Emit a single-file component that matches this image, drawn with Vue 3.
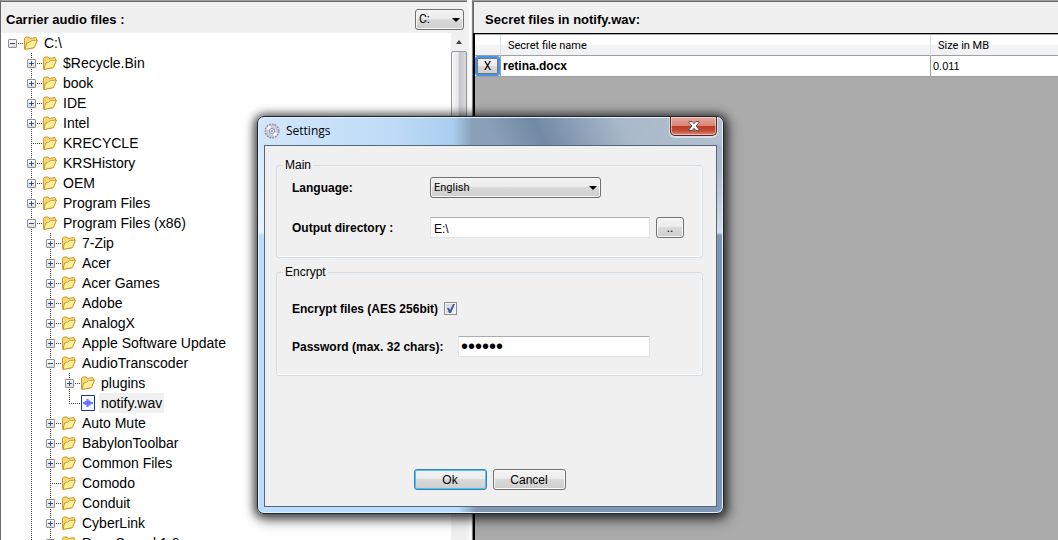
<script setup>
import { ref } from 'vue'

const entries = [
  [0, 'C:\\', 'minus'],
  [1, '$Recycle.Bin', 'plus'],
  [1, 'book', 'plus'],
  [1, 'IDE', 'plus'],
  [1, 'Intel', 'plus'],
  [1, 'KRECYCLE', ''],
  [1, 'KRSHistory', 'plus'],
  [1, 'OEM', 'plus'],
  [1, 'Program Files', 'plus'],
  [1, 'Program Files (x86)', 'minus'],
  [2, '7-Zip', 'plus'],
  [2, 'Acer', 'plus'],
  [2, 'Acer Games', 'plus'],
  [2, 'Adobe', 'plus'],
  [2, 'AnalogX', 'plus'],
  [2, 'Apple Software Update', 'plus'],
  [2, 'AudioTranscoder', 'minus'],
  [3, 'plugins', 'plus'],
  [3, 'notify.wav', '', true],
  [2, 'Auto Mute', 'plus'],
  [2, 'BabylonToolbar', 'plus'],
  [2, 'Common Files', 'plus'],
  [2, 'Comodo', ''],
  [2, 'Conduit', 'plus'],
  [2, 'CyberLink', 'plus'],
  [2, 'DeepSound 1.6', 'plus'],
]
const rows = entries.map(([depth, name, toggle, wave]) => ({ depth, name, toggle, wave: !!wave }))

const drive = ref('C:')
const language = ref('English')
const output = ref('E:\\')
const encrypt = ref(true)
const password = ref('secret')
</script>

<template>
  <main class="app">
    <section class="carrier">
      <header class="bar">
        <label for="drive">Carrier audio files :</label>
        <span class="combo drive">
          <select id="drive" v-model="drive"><option>C:</option></select>
        </span>
      </header>
      <div class="browser">
        <ul class="tree">
          <li v-for="row in rows" :key="row.name" class="row">
            <span v-for="n in row.depth" :key="n" class="guide" :class="{ line: n > 1 }"></span>
            <span class="guide branch" :class="{ line: row.depth > 0, last: row.wave }">
              <button v-if="row.toggle" class="toggle" :class="row.toggle" :aria-label="'Toggle ' + row.name"></button>
            </span>
            <svg v-if="!row.wave" class="icon" width="14" height="14" viewBox="0 0 14 14">
              <path d="M.5 12.500V2L2 1h3l1 1.500 6-1 .500 1V6l-3 6-9 1z" fill="#f8d774" stroke="#d09b33" />
              <path d="M2.500 7l3-.500 1.500-1.500 6.500-1-3 7.500-9.500 2z" fill="#fff095" stroke="#cf9426" />
              <path d="M4 7.500l2-.500 1.500-1.200 4.500-.600" fill="none" stroke="#fffbd0" />
            </svg>
            <svg v-else class="icon" width="14" height="16" viewBox="0 0 14 16">
              <path d="M.5.5h13v15H.5z" fill="#f4f7ff" stroke="#173b72" />
              <path d="M2 8h10M4.500 6v4M6.500 4v8M8.500 5.500v5M10.500 7v2" fill="none" stroke="#6d75ff" stroke-width="2" />
            </svg>
            <span class="name" :class="{ picked: row.wave }">{{ row.name }}</span>
          </li>
        </ul>
        <div class="scroll">
          <svg width="16" height="18" viewBox="0 0 16 18"><path d="M5 11l3-4 3 4z" fill="#404040" /></svg>
          <div class="thumb"></div>
        </div>
      </div>
    </section>

    <section class="secret">
      <header class="bar"><h1>Secret files in notify.wav:</h1></header>
      <div class="grid">
        <table>
          <thead>
            <tr><th class="action"></th><th>Secret file name</th><th class="size">Size in MB</th></tr>
          </thead>
          <tbody>
            <tr>
              <td class="action"><button class="remove" aria-label="Remove retina.docx">X</button></td>
              <td class="file">retina.docx</td>
              <td>0.011</td>
            </tr>
          </tbody>
        </table>
      </div>
    </section>

    <section class="dialog" role="dialog" aria-labelledby="dialog-title">
      <header class="title">
        <svg width="16" height="16" viewBox="0 0 16 16">
          <circle cx="8" cy="8" r="6.500" fill="none" stroke="#85859a" stroke-width="2" stroke-dasharray="1.700 1" />
          <circle cx="8" cy="8" r="5.500" fill="#d3d3e2" stroke="#c4c4d4" stroke-width="2" />
          <path d="M8 8L2.500 6A6 6 0 0 1 6 2.500zM8 8l5.500 2A6 6 0 0 1 10 13.500z" fill="#fff" />
          <circle cx="8" cy="8" r="2.500" fill="#eef6fa" stroke="#85879b" />
          <circle cx="8" cy="8" r="1" fill="#6fa3b8" />
        </svg>
        <h2 id="dialog-title">Settings</h2>
        <button class="close" aria-label="Close">
          <svg width="12" height="10" viewBox="0 0 12 10">
            <path d="M1 .5h3.200L6 2.700 7.800.500H11v1L8.200 5 11 8.500v1H7.800L6 7.300 4.200 9.500H1v-1L3.800 5 1 1.500z" fill="#fff" stroke="#5c4e5c" />
          </svg>
        </button>
      </header>
      <form class="client" @submit.prevent>
        <fieldset>
          <legend>Main</legend>
          <div class="field">
            <label for="language">Language:</label>
            <span class="combo language">
              <select id="language" v-model="language"><option>English</option></select>
            </span>
          </div>
          <div class="field">
            <label for="output">Output directory :</label>
            <input id="output" v-model="output" class="text" type="text" />
            <button type="button" class="browse" aria-label="Browse">..</button>
          </div>
        </fieldset>
        <fieldset class="encrypt">
          <legend>Encrypt</legend>
          <div class="field">
            <label for="encrypt" class="inline">Encrypt files (AES 256bit)</label>
            <input id="encrypt" v-model="encrypt" class="check" type="checkbox" />
          </div>
          <div class="field">
            <label for="password">Password (max. 32 chars):</label>
            <input id="password" v-model="password" class="text secretbox" type="password" />
          </div>
        </fieldset>
        <footer>
          <button type="submit" class="ok">Ok</button>
          <button type="button">Cancel</button>
        </footer>
      </form>
    </section>
  </main>
</template>

<style>
body {
  overflow: hidden;
}
</style>

<style scoped>
* {
  box-sizing: border-box;
}
.app {
  position: relative;
  display: grid;
  grid-template-columns: 467px minmax(0, 1fr);
  column-gap: 5px;
  height: 100vh;
  overflow: hidden;
  background: linear-gradient(90deg, #f0f0f0, #fff) 467px 0 / 4px 100% no-repeat #f0f0f0;
  color: #000;
  font-family: "Liberation Sans", Arial, sans-serif;
  font-size: 12px;
}
h1,
h2 {
  margin: 0;
  font-size: 13px;
}
button,
select,
input {
  margin: 0;
  color: #000;
  font-family: inherit;
  font-size: 12px;
}
button {
  padding: 0;
  border: 1px solid #707070;
  border-radius: 3px;
  background: linear-gradient(#f3f3f3, #ebebeb 49%, #dadada 50%, #cdcdcd);
  box-shadow: inset 0 0 0 1px #fafafa;
}
.carrier,
.secret {
  display: flex;
  flex-direction: column;
  min-height: 0;
  border-top: 1px solid #a0a0a0;
}
.carrier {
  border-left: 1px solid #696969;
}
.secret {
  border-left: 1px solid #808080;
}
.bar {
  display: flex;
  flex: none;
  align-items: center;
  justify-content: space-between;
  height: 32px;
  padding: 3px 3px 0 5px;
  border-top: 1px solid #696969;
  background: #f0f0f0;
  font-size: 13px;
  font-weight: bold;
}
.secret .bar {
  padding-left: 11px;
  border-left: 1px solid #696969;
}

/* drop-downs */
.combo {
  position: relative;
  display: inline-flex;
}
.combo select {
  width: 100%;
  height: 21px;
  padding: 0 3px;
  border: 1px solid #707070;
  border-radius: 3px;
  appearance: none;
  background: linear-gradient(#f3f3f3, #ebebeb 49%, #dadada 50%, #cdcdcd);
  box-shadow: inset 0 0 0 1px #f6f6f6;
  font-family: Roboto, sans-serif;
}
.combo::after {
  position: absolute;
  top: 9px;
  right: 4px;
  border: 4px solid transparent;
  border-top-color: #000;
  border-bottom: 0;
  content: "";
  pointer-events: none;
}
.drive {
  width: 49px;
}
.language {
  width: 171px;
}
.language select {
  font-size: 11px;
}

/* folder tree */
.browser {
  display: flex;
  flex: 1;
  min-height: 0;
  background: #fff;
}
.tree {
  flex: 1;
  margin: 0;
  padding: 0 0 0 2px;
  overflow: hidden;
  list-style: none;
  font-size: 14px;
}
.row {
  display: flex;
  align-items: center;
  height: 20px;
}
.guide {
  position: relative;
  display: flex;
  flex: none;
  align-items: center;
  width: 19px;
  height: 20px;
  padding-left: 5px;
}
.line {
  background: repeating-linear-gradient(#444 0 1px, transparent 1px 2px) 9px 0 / 1px 100% no-repeat;
}
.line.last {
  background-size: 1px 11px;
}
.branch::before {
  position: absolute;
  top: 10px;
  right: -1px;
  left: 10px;
  height: 1px;
  background: repeating-linear-gradient(90deg, transparent 0 1px, #444 1px 2px);
  content: "";
}
.toggle {
  position: relative;
  width: 9px;
  height: 9px;
  border-color: #919191;
  border-radius: 1px;
  background: linear-gradient(#2f4c94, #2f4c94) center / 5px 1px no-repeat, linear-gradient(#fff, #dcdcdc);
  box-shadow: none;
}
.toggle.plus {
  background: linear-gradient(#2f4c94, #2f4c94) center / 5px 1px no-repeat,
    linear-gradient(#2f4c94, #2f4c94) center / 1px 5px no-repeat, linear-gradient(#fff, #dcdcdc);
}
.icon {
  flex: none;
  margin: 0 4px 0 2px;
}
.name {
  padding: 0 2px;
  line-height: 20px;
  white-space: nowrap;
}
.picked {
  background: #f0f0f0;
}
.scroll {
  display: flex;
  flex-direction: column;
  flex: none;
  width: 16px;
  background: #f0f0f0;
}
.thumb {
  height: 60%;
  border: 1px solid #979797;
  border-radius: 2px;
  background: linear-gradient(90deg, #f5f5f5, #e9e9eb 45%, #c5c5c9 50%, #dadadc);
}

/* secret file table */
.grid {
  flex: 1;
  padding: 1px 0 0;
  border-top: 1px solid #000;
  border-left: 2px solid #000;
  background: #ababab;
}
table {
  width: 100%;
  border-collapse: separate;
  border-spacing: 0;
  background: #fff;
  font-family: Roboto, sans-serif;
  font-size: 11px;
}
th {
  height: 21px;
  padding: 0 7px;
  border-right: 1px solid #dedfe1;
  border-bottom: 1px solid #a0a0a0;
  background: linear-gradient(#fff 45%, #f3f4f6 50%, #f0f1f3);
  font-weight: normal;
  text-align: left;
}
td {
  height: 21px;
  padding: 0 2px;
  border-right: 1px solid #a0a0a0;
  border-bottom: 1px solid #a0a0a0;
}
td:last-child {
  font-family: "Liberation Sans", Arial, sans-serif;
}
th:last-child,
td:last-child {
  border-right: 0;
}
.action {
  width: 26px;
  padding: 0;
}
.size {
  width: 127px;
}
.remove {
  display: block;
  width: 100%;
  height: 20px;
  border: 2px solid #3e95ee;
  box-shadow: inset 0 0 0 1px #777;
  font-family: Roboto, sans-serif;
}
.file {
  font-family: "Liberation Sans", Arial, sans-serif;
  font-size: 12px;
  font-weight: bold;
}

/* settings window */
.dialog {
  position: absolute;
  top: 116px;
  left: 257px;
  width: 467px;
  padding: 0 6px 6px;
  border: 1px solid #20262e;
  border-radius: 7px;
  background:
    linear-gradient(65deg, transparent 50%, #7289a5 60%, #a9b9c9 78%, #b3c2d0) 0 0 / 100% 28px no-repeat,
    linear-gradient(90deg, #d3e7fb, #bddaf7 30%, #a9cdf0 42%, #8aa0b8 46%, #8ba2bd) 0 0 / 100% 28px no-repeat,
    linear-gradient(#d0e6fb, #e9f3fd 98%, #b9dcff) 0 0 / 50% 118px no-repeat,
    linear-gradient(#a9b9c9 40%, #d5dee8 98%, #8099b6) 100% 0 / 50% 118px no-repeat,
    linear-gradient(90deg, #b9dcff 43%, #8098b3 47%, #7d97b5);
  box-shadow: inset 0 0 0 1px #e4f0fb, 0 1px 8px 3px rgba(0, 0, 0, 0.6), 2px 4px 14px 3px rgba(0, 0, 0, 0.35);
}
.title {
  display: flex;
  align-items: center;
  height: 28px;
}
.title h2 {
  flex: 1;
  padding: 0 0 2px 6px;
  font-family: "Open Sans", sans-serif;
  font-size: 12px;
  font-weight: normal;
}
.close {
  display: flex;
  align-self: flex-start;
  align-items: center;
  justify-content: center;
  width: 47px;
  height: 19px;
  border-color: #51262a;
  border-top: 0;
  border-radius: 0 0 5px 5px;
  background: linear-gradient(#e8aaa0, #d88577 48%, #bd3b25 50%, #c34a33 75%, #dd8877);
  box-shadow: inset 0 0 0 1px rgba(255, 225, 215, 0.6), 0 1px 0 1px rgba(255, 255, 255, 0.5);
}
.client {
  padding: 11px 13px 16px 11px;
  border: 1px solid #56677c;
  background: #f0f0f0;
}
fieldset {
  display: block;
  min-width: 0;
  margin: 0 0 6px;
  padding: 4px 6px 19px;
  border: 1px solid #d3dde6;
  border-radius: 3px;
  box-shadow: inset -1px -1px 0 #fff;
}
fieldset.encrypt {
  margin: 0;
  padding: 18px 6px 18px;
}
legend {
  height: 16px;
  padding: 0 2px;
  line-height: 16px;
}
.field {
  display: flex;
  align-items: center;
  height: 21px;
  padding-left: 9px;
}
.field + .field {
  margin-top: 19px;
}
.encrypt .field + .field {
  margin-top: 17px;
}
.field label {
  width: 138px;
  font-weight: bold;
  white-space: nowrap;
}
.encrypt .field label {
  width: 166px;
}
.encrypt .field .inline {
  width: auto;
  margin-right: 6px;
}
.text {
  width: 220px;
  height: 21px;
  padding: 2px 3px 0;
  border: 1px solid #e2e3ea;
  border-top-color: #abadb3;
  background: #fff;
}
.secretbox {
  width: 192px;
  padding: 0 2px;
  font-size: 20px;
  line-height: 19px;
}
.browse {
  width: 28px;
  height: 21px;
  margin-left: 6px;
}
.check {
  width: 13px;
  height: 13px;
  border: 1px solid #8e8f8f;
  appearance: none;
  background: linear-gradient(135deg, #cbcfd5, #f6f6f6);
  box-shadow: inset 0 0 0 1px #f4f4f4;
}
.check:checked::before {
  display: block;
  width: 11px;
  height: 11px;
  background: #3f5a9d;
  clip-path: polygon(18% 45%, 36% 45%, 45% 64%, 73% 10%, 90% 10%, 54% 90%, 36% 90%);
  content: "";
}
footer {
  display: flex;
  justify-content: center;
  gap: 6px;
  margin-top: 93px;
}
footer button {
  width: 73px;
  height: 21px;
}
footer .ok {
  border-color: #3c7fb1;
  box-shadow: inset 0 0 0 1px #48c8f2;
}
</style>
